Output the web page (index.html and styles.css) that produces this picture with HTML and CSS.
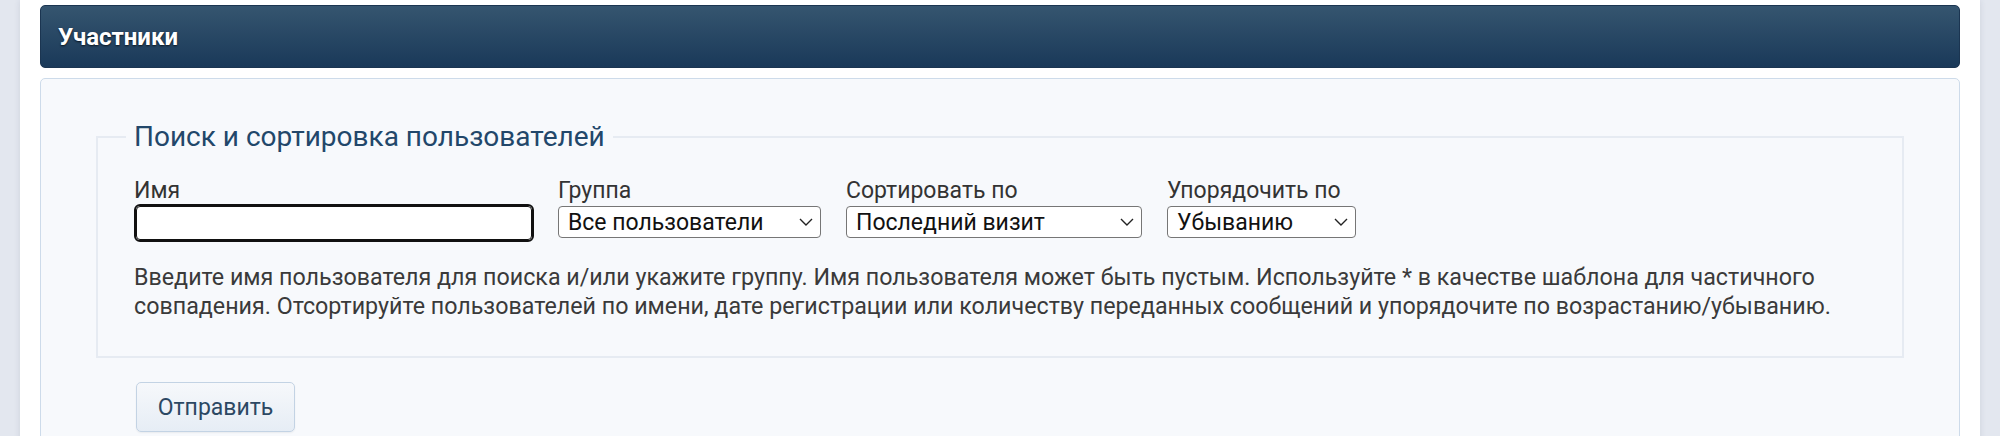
FILE: index.html
```html
<!DOCTYPE html>
<html lang="ru">
<head>
<meta charset="utf-8">
<title>Участники</title>
<link rel="stylesheet" href="styles.css">
</head>
<body>
<div class="page">
  <div class="cat">Участники</div>
  <div class="box">
    <form class="form">
      <fieldset class="fs">
        <legend class="lg">Поиск и сортировка пользователей</legend>
        <div class="row">
          <div class="col col-name">
            <label class="lbl">Имя</label>
            <input class="txt" type="text">
          </div>
          <div class="col">
            <label class="lbl">Группа</label>
            <span class="sel sel-group"><select><option>Все пользователи</option></select><svg class="chev" viewBox="0 0 14 8"><path d="M1 1l6 6 6-6"/></svg></span>
          </div>
          <div class="col">
            <label class="lbl">Сортировать по</label>
            <span class="sel sel-sort"><select><option>Последний визит</option></select><svg class="chev" viewBox="0 0 14 8"><path d="M1 1l6 6 6-6"/></svg></span>
          </div>
          <div class="col">
            <label class="lbl">Упорядочить по</label>
            <span class="sel sel-order"><select><option>Убыванию</option></select><svg class="chev" viewBox="0 0 14 8"><path d="M1 1l6 6 6-6"/></svg></span>
          </div>
        </div>
        <p class="desc">Введите имя пользователя для поиска и/или укажите группу. Имя пользователя может быть пустым. Используйте * в качестве шаблона для частичного совпадения. Отсортируйте пользователей по имени, дате регистрации или количеству переданных сообщений и упорядочите по возрастанию/убыванию.</p>
      </fieldset>
      <button class="btn" type="button">Отправить</button>
    </form>
  </div>
</div>
</body>
</html>
```
FILE: styles.css
```css
html, body {
  margin: 0;
  padding: 0;
}
body {
  background: #e3e7ef;
  font-family: Roboto, "Noto Sans", sans-serif;
  color: #333;
}
.page {
  margin: 0 20px;
  min-height: 436px;
  box-sizing: border-box;
  background: #fff;
  padding: 5px 20px 0;
  box-shadow: 0 0 6px rgba(40, 60, 90, 0.12);
}
.cat {
  height: 63px;
  box-sizing: border-box;
  display: flex;
  align-items: center;
  padding-left: 17px;
  border-radius: 5px;
  border: 1px solid #1b3551;
  background: linear-gradient(#35556f, #1a3959);
  color: #fff;
  font-weight: 700;
  font-size: 24px;
  text-shadow: 0 1px 2px rgba(0, 0, 0, 0.7);
}
.box {
  margin-top: 10px;
  border: 1px solid #cddbea;
  border-radius: 5px;
  background: #f7f9fc;
  padding: 41px 55px 20px;
}
.form {
  margin: 0;
}
.fs {
  margin: 0;
  border: 2px solid #e6ebf2;
  padding: 25px 36px 35px;
  min-width: 0;
}
.lg {
  font-size: 28px;
  color: #22476a;
  padding: 0 8px;
  margin-left: -8px;
}
.row {
  display: flex;
  align-items: flex-start;
  gap: 25px;
}
.col {
  display: flex;
  flex-direction: column;
}
.lbl {
  font-size: 23px;
  line-height: 26px;
  color: #333;
  margin-bottom: 2px;
}
.txt {
  box-sizing: border-box;
  width: 396px;
  height: 34px;
  margin: 0 1px 0 2px;
  border: 1px solid #111;
  outline: 2px solid #111;
  border-radius: 4px;
  background: #fff;
  font: 23px Roboto, sans-serif;
}
.sel {
  position: relative;
  display: block;
}
.sel select {
  -webkit-appearance: none;
  appearance: none;
  display: block;
  box-sizing: border-box;
  width: 100%;
  height: 32px;
  margin: 0;
  padding: 0 30px 0 9px;
  border: 1px solid #767676;
  border-radius: 4px;
  background: #fff;
  color: #111;
  font: 23px Roboto, sans-serif;
}
.sel-group { width: 263px; }
.sel-sort { width: 296px; }
.sel-order { width: 189px; }
.chev {
  position: absolute;
  right: 8px;
  top: 12px;
  width: 14px;
  height: 8px;
  fill: none;
  stroke: #222;
  stroke-width: 1.4;
  pointer-events: none;
}
.desc {
  margin: 23px 0 0;
  font-size: 23.25px;
  line-height: 29px;
  color: #3a3a3a;
}
.btn {
  display: block;
  margin: 24px 0 0 40px;
  width: 159px;
  height: 50px;
  border: 1px solid #c3d3e4;
  border-radius: 5px;
  background: linear-gradient(#f6f8fb, #e6edf5);
  color: #2c4863;
  font: 23px Roboto, sans-serif;
  box-shadow: 0 1px 2px rgba(0, 0, 0, 0.06);
}
```
